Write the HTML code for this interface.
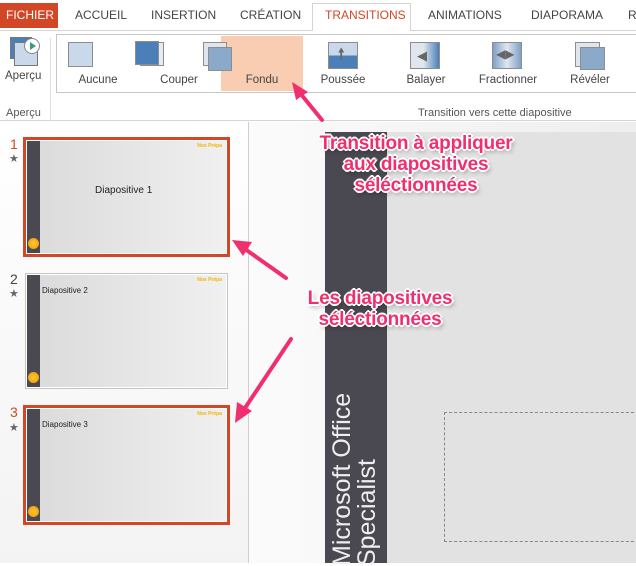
<!DOCTYPE html>
<html><head><meta charset="utf-8"><style>
*{margin:0;padding:0;box-sizing:border-box}
body{width:636px;height:563px;overflow:hidden;background:#fff;font-family:"Liberation Sans","DejaVu Sans",sans-serif;position:relative;color:#444}
.a{position:absolute}
.tab{position:absolute;top:8px;font-size:12px;color:#444}
.lbl{position:absolute;top:74px;font-size:11.5px;color:#444;text-align:center;width:80px}
.ico{position:absolute;top:42px;width:30px;height:27px;border:1.5px solid #8d8d8d;background:#c9d8ea}
.ann{position:absolute;font-weight:bold;font-size:19px;color:#f0306e;text-align:center;line-height:21px;letter-spacing:-0.2px;text-shadow:-2px 0 #fff,2px 0 #fff,0 -2px #fff,0 2px #fff,-1px -1px #fff,1px 1px #fff,-1px 1px #fff,1px -1px #fff,2px 3px 4px rgba(0,0,0,.35)}
.thumb{position:absolute;background:linear-gradient(90deg,#dadada,#f0f0f0)}
.strip{position:absolute;left:0;top:0;bottom:0;width:13px;background:#4a4850}
.sun{position:absolute;left:1px;bottom:4px;width:11px;height:11px;border-radius:50%;background:radial-gradient(#ffcc33,#f09000)}
.np{position:absolute;right:4px;top:2px;font-size:5px;font-weight:bold;color:#f4b400}
.num{position:absolute;left:10px;font-size:14px}
.star{position:absolute;left:9px;font-size:11px;color:#666}
</style></head><body>
<div class="a" style="left:0;top:0;width:636px;height:31px;background:#fff;border-bottom:1px solid #d4d4d4"></div>
<div class="a" style="left:0;top:3px;width:58px;height:25px;background:#d24726;color:#fff;font-size:12px;padding:5px 0 0 6px">FICHIER</div>
<div class="tab" style="left:75px">ACCUEIL</div>
<div class="tab" style="left:151px">INSERTION</div>
<div class="tab" style="left:240px">CRÉATION</div>
<div class="a" style="left:312px;top:3px;width:99px;height:29px;background:#fff;border:1px solid #d4d4d4;border-bottom:none"></div>
<div class="tab" style="left:325px;color:#d24726">TRANSITIONS</div>
<div class="tab" style="left:428px">ANIMATIONS</div>
<div class="tab" style="left:531px">DIAPORAMA</div>
<div class="tab" style="left:628px">R</div>
<div class="a" style="left:0;top:31px;width:636px;height:90px;background:#fff;border-bottom:1px solid #d4d4d4"></div>
<div class="a" style="left:10px;top:37px;width:22px;height:22px;background:#4a7fb8;border:1px solid #777"></div>
<div class="a" style="left:14px;top:42px;width:24px;height:24px;background:#c9d8ea;border:1px solid #777"></div>
<div class="a" style="left:24px;top:38px;width:16px;height:16px;border-radius:50%;background:#fff;border:1.5px solid #888"></div>
<div class="a" style="left:30px;top:42px;width:0;height:0;border-left:6px solid #3a9a7a;border-top:4px solid transparent;border-bottom:4px solid transparent"></div>
<div class="a" style="left:5px;top:70px;font-size:11.5px">Aperçu</div>
<div class="a" style="left:6px;top:107px;font-size:11px;color:#555">Aperçu</div>
<div class="a" style="left:50px;top:38px;width:1px;height:103px;background:#e0e0e0"></div>
<div class="a" style="left:56px;top:34px;width:590px;height:59px;border:1px solid #c6c6c6"></div>
<div class="a" style="left:221px;top:36px;width:82px;height:55px;background:#f9cdb2"></div>
<div class="ico" style="left:68px;width:25px;height:25px"></div>
<div class="ico" style="left:140px;width:24px;height:24px;background:#e4ebf3"></div>
<div class="ico" style="left:135px;top:41px;width:24px;height:24px;background:#4a7fb8"></div>
<div class="ico" style="left:203px;width:24px;height:24px;background:#dfe6ee"></div>
<div class="ico" style="left:208px;top:47px;width:24px;height:24px;background:#8ba9c9"></div>
<div class="ico" style="left:328px;background:linear-gradient(#c9d8ea 50%,#4a7fb8 50%)"><div class="a" style="left:9px;top:4px;color:#666;font-size:15px;font-weight:bold;line-height:15px">🠕</div></div>
<div class="ico" style="left:410px;background:linear-gradient(90deg,#dfe6ee 45%,#4a7fb8)"><div class="a" style="left:6px;top:5px;color:#666;font-size:13px;font-weight:bold">◀</div></div>
<div class="ico" style="left:492px;background:linear-gradient(90deg,#7fa0c8,#dfe6ee 50%,#7fa0c8)"><div class="a" style="left:3px;top:4px;color:#666;font-size:12px;font-weight:bold">◀▶</div></div>
<div class="ico" style="left:575px;width:25px;height:25px;background:#dfe6ee"></div>
<div class="ico" style="left:580px;top:47px;width:25px;height:23px;background:#8ba9c9"></div>
<div class="lbl" style="left:58px">Aucune</div>
<div class="lbl" style="left:139px">Couper</div>
<div class="lbl" style="left:222px">Fondu</div>
<div class="lbl" style="left:303px">Poussée</div>
<div class="lbl" style="left:386px">Balayer</div>
<div class="lbl" style="left:468px">Fractionner</div>
<div class="lbl" style="left:550px">Révéler</div>
<div class="a" style="left:418px;top:107px;font-size:11px;color:#555">Transition vers cette diapositive</div>
<div class="a" style="left:0;top:122px;width:248px;height:441px;background:linear-gradient(#fff,#f3f3f3)"></div>
<div class="a" style="left:248px;top:122px;width:1px;height:441px;background:#cfcfcf"></div>
<div class="num" style="top:136px;color:#d24726">1</div><div class="star" style="top:152px">★</div>
<div class="num" style="top:271px;color:#444">2</div><div class="star" style="top:287px">★</div>
<div class="num" style="top:404px;color:#d24726">3</div><div class="star" style="top:421px">★</div>
<div class="a" style="left:23px;top:137px;width:207px;height:120px;border:3px solid #d24726;background:#fff"></div>
<div class="thumb" style="left:27px;top:141px;width:199px;height:112px"><div class="strip"></div><div class="sun"></div><div class="np">Nos Prépa</div><div class="a" style="left:68px;top:44px;font-size:10px;color:#222">Diapositive 1</div></div>
<div class="a" style="left:25px;top:273px;width:203px;height:116px;border:1px solid #c4c4c4;background:#fff"></div>
<div class="thumb" style="left:27px;top:275px;width:199px;height:112px"><div class="strip"></div><div class="sun"></div><div class="np">Nos Prépa</div><div class="a" style="left:15px;top:11px;font-size:8px;color:#222">Diapositive 2</div></div>
<div class="a" style="left:23px;top:405px;width:207px;height:120px;border:3px solid #d24726;background:#fff"></div>
<div class="thumb" style="left:27px;top:409px;width:199px;height:112px"><div class="strip"></div><div class="sun"></div><div class="np">Nos Prépa</div><div class="a" style="left:15px;top:11px;font-size:8px;color:#222">Diapositive 3</div></div>
<div class="a" style="left:249px;top:122px;width:387px;height:441px;background:linear-gradient(90deg,#fbfbfb,#eeeeee)"></div>
<div class="a" style="left:325px;top:132px;width:62px;height:431px;background:#4a4850"></div>
<div class="a" style="left:387px;top:132px;width:249px;height:431px;background:#e2e2e2"></div>
<div class="a" style="left:444px;top:412px;width:200px;height:130px;border:1px dashed #888"></div>
<div class="a" style="left:330px;top:566px;transform:rotate(-90deg);transform-origin:0 0;color:#eee;font-size:25px;line-height:25px;white-space:nowrap">Microsoft Office<br>Specialist</div>
<div class="ann" style="left:296px;top:133px;width:240px">Transition à appliquer<br>aux diapositives<br>séléctionnées</div>
<div class="ann" style="left:285px;top:288px;width:190px">Les diapositives<br>séléctionnées</div>
<svg class="a" style="left:0;top:0" width="636" height="563">
<g stroke="#f0306e" stroke-width="4" fill="#f0306e" stroke-linecap="round">
<line x1="322" y1="120" x2="300" y2="93"/><polygon points="292,82 308,92 296,100" stroke="none"/>
<line x1="286" y1="278" x2="245" y2="249"/><polygon points="232,240 252,242 243,256" stroke="none"/>
<line x1="291" y1="339" x2="243" y2="411"/><polygon points="235,423 237,402 252,411" stroke="none"/>
</g></svg>
</body></html>
